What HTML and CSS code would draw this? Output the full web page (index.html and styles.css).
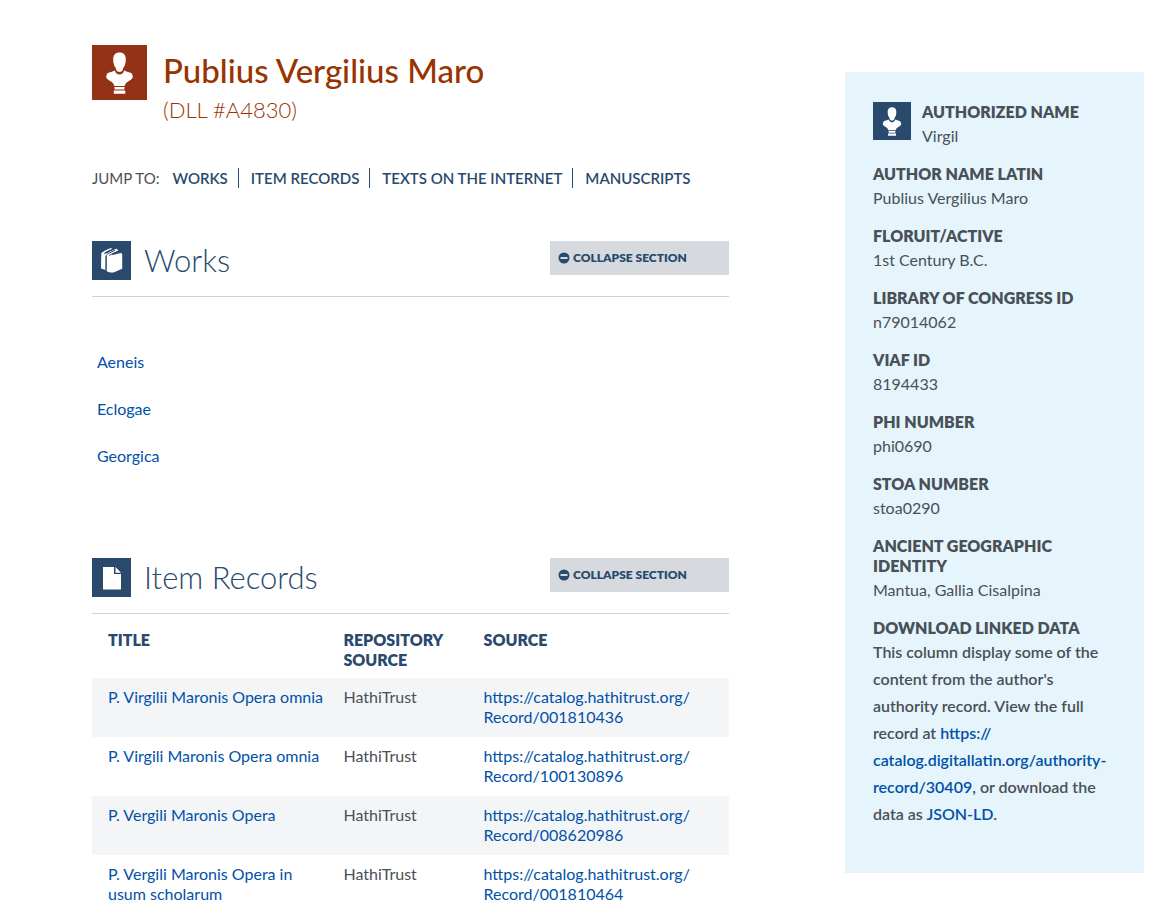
FILE: index.html
```html
<!DOCTYPE html>
<html lang="en">
<head>
<meta charset="utf-8">
<meta name="viewport" content="width=device-width, initial-scale=1">
<title>Publius Vergilius Maro</title>
<link rel="stylesheet" href="styles.css">
</head>
<body>
<svg class="sprite" aria-hidden="true">
  <symbol id="bust" viewBox="0 0 55 55">
    <path d="M27.500 7.500c4.200 0 6.300 2.700 6.300 6.500 0 4.500-1 7.300-2.900 9.400v1.300c-.8 1.500-2 2.200-3.400 2.200s-2.600-.7-3.400-2.200v-1.300c-1.900-2.100-2.900-4.900-2.900-9.400 0-3.800 2.100-6.500 6.300-6.500z"/>
    <path d="M22.800 25.500c.8 2.700 2.500 4 4.700 4s3.900-1.300 4.700-4c2 1.500 5.300 1.400 7.300 2.700 1.200 1.100.4 2.200 1.500 3.600-.8 2.300-2.500 3.400-5 4.700-2 1.400-2.800 2.700-3.300 4.500H22.300c-.5-1.800-1.300-3.100-3.300-4.500-2.500-1.300-4.200-2.400-5-4.700 1.100-1.400.3-2.500 1.500-3.600 2-1.300 5.300-1.200 7.300-2.700z"/>
    <path d="M22.500 42h10v1.500l-.5 1h-9l-.5-1zM21.800 45.500h11.500v3.200H21.800z"/>
  </symbol>
  <symbol id="books" viewBox="0 0 39 39">
    <path d="M9.300 12c2-1.700 6.500-3.800 9.700-5l1.200 1c-3 1-5.600 2.200-7.600 3.600l2.400.9c2.500-2 6-3.700 9.600-4.700l1.200 1-8.300 3.700-3.900 2.800V29L9 27.500z"/>
    <path d="M14.600 14.400c0-1 1-1.800 2.300-2.500l8-3.200 1.500.9-7.300 3.700 1.800.7 7.700-2 1.600.7v15l-8.700 3.700c-2 .6-5-.2-6.900-1.500z"/>
    <path class="icon-line" d="M12.200 12.700l8.800-4.300M14.100 29.500V15c.2-1 1-1.700 2.400-2.500l6.500-3.300M17.300 14.500c3-1.900 6.200-3.300 9.200-4.200"/>
  </symbol>
  <symbol id="file" viewBox="0 0 39 39">
    <path d="M11 9h11v7h7v15.500H11zM23.500 9l5.500 5.700h-5.500z"/>
  </symbol>
  <symbol id="minus" viewBox="0 0 12 12">
    <path fill-rule="evenodd" d="M6 .5a5.500 5.500 0 1 1 0 11a5.500 5.500 0 0 1 0-11zM2.500 5v2h7V5z"/>
  </symbol>
</svg>
<div class="page">
  <main>
    <header class="author">
      <svg class="icon icon-author"><use href="#bust"/></svg>
      <div>
        <h1>Publius Vergilius Maro</h1>
        <p class="author-id">(DLL #A4830)</p>
      </div>
    </header>
    <nav class="jump" aria-label="Jump to">
      <span>JUMP TO:</span>
      <ul>
        <li><a href="#works">WORKS</a></li>
        <li><a href="#items">ITEM RECORDS</a></li>
        <li><a href="#texts">TEXTS ON THE INTERNET</a></li>
        <li><a href="#manuscripts">MANUSCRIPTS</a></li>
      </ul>
    </nav>
    <section id="works">
      <div class="section-head">
        <svg class="icon"><use href="#books"/></svg>
        <h2>Works</h2>
        <button type="button" class="collapse"><svg><use href="#minus"/></svg>COLLAPSE SECTION</button>
      </div>
      <ul class="works">
        <li><a href="#aeneis">Aeneis</a></li>
        <li><a href="#eclogae">Eclogae</a></li>
        <li><a href="#georgica">Georgica</a></li>
      </ul>
    </section>
    <section id="items">
      <div class="section-head">
        <svg class="icon"><use href="#file"/></svg>
        <h2>Item Records</h2>
        <button type="button" class="collapse"><svg><use href="#minus"/></svg>COLLAPSE SECTION</button>
      </div>
      <table>
        <colgroup><col class="col-title"><col class="col-repo"><col></colgroup>
        <thead>
          <tr><th scope="col">TITLE</th><th scope="col">REPOSITORY SOURCE</th><th scope="col">SOURCE</th></tr>
        </thead>
        <tbody>
          <tr><td><a href="#r1">P. Virgilii Maronis Opera omnia</a></td><td>HathiTrust</td><td><a href="#s1">https://catalog.hathitrust.org/<wbr>Record/001810436</a></td></tr>
          <tr><td><a href="#r2">P. Virgili Maronis Opera omnia</a></td><td>HathiTrust</td><td><a href="#s2">https://catalog.hathitrust.org/<wbr>Record/100130896</a></td></tr>
          <tr><td><a href="#r3">P. Vergili Maronis Opera</a></td><td>HathiTrust</td><td><a href="#s3">https://catalog.hathitrust.org/<wbr>Record/008620986</a></td></tr>
          <tr><td><a href="#r4">P. Vergili Maronis Opera in usum scholarum</a></td><td>HathiTrust</td><td><a href="#s4">https://catalog.hathitrust.org/<wbr>Record/001810464</a></td></tr>
        </tbody>
      </table>
    </section>
  </main>
  <aside>
    <div class="authorized">
      <svg class="icon"><use href="#bust"/></svg>
      <dl><div><dt>AUTHORIZED NAME</dt><dd>Virgil</dd></div></dl>
    </div>
    <dl>
      <div><dt>AUTHOR NAME LATIN</dt><dd>Publius Vergilius Maro</dd></div>
      <div><dt>FLORUIT/ACTIVE</dt><dd>1st Century B.C.</dd></div>
      <div><dt>LIBRARY OF CONGRESS ID</dt><dd>n79014062</dd></div>
      <div><dt>VIAF ID</dt><dd>8194433</dd></div>
      <div><dt>PHI NUMBER</dt><dd>phi0690</dd></div>
      <div><dt>STOA NUMBER</dt><dd>stoa0290</dd></div>
      <div><dt>ANCIENT GEOGRAPHIC IDENTITY</dt><dd>Mantua, Gallia Cisalpina</dd></div>
    </dl>
    <h3>DOWNLOAD LINKED DATA</h3>
    <p class="download">This column display some of the content from the author's authority record. View the full record at <a href="#record">https://<wbr>catalog.digitallatin.org/authority-record/30409</a>, or download the data as <a href="#json">JSON-LD</a>.</p>
  </aside>
</div>
</body>
</html>
```
FILE: styles.css
```css
* { box-sizing: border-box; }
body {
  margin: 0;
  background: #fff;
  color: #495057;
  font: 400 16px/20px Lato, "Liberation Sans", sans-serif;
}
h1, h2, h3, p, ul, dl, dd { margin: 0; padding: 0; }
ul { list-style: none; }
a { color: #0051a8; text-decoration: none; }
a:hover { text-decoration: underline; }
.sprite { position: absolute; width: 0; height: 0; }
.page {
  display: grid;
  grid-template-columns: minmax(0, 637fr) minmax(0, 299fr);
  gap: 116px;
  align-items: start;
  padding: 45px 28px 32px 92px;
}
.icon {
  flex: none;
  width: 39px;
  height: 39px;
  background: #29496d;
  fill: #fff;
}
.icon-line { fill: none; stroke: #29496d; stroke-width: 1; }

.author { display: flex; gap: 16px; color: #993300; }
.icon-author { width: 55px; height: 55px; background: #943217; }
h1 { font-size: 33px; line-height: 50px; font-weight: 500; }
.author-id { font-size: 22px; line-height: 30px; font-weight: 300; }

.jump { display: flex; gap: 13px; margin-top: 43px; font-size: 15px; }
.jump ul { display: flex; }
.jump li + li { margin-left: 10px; padding-left: 12px; border-left: 1px solid #29496d; }
.jump a { color: #29496d; font-weight: 600; }

.section-head {
  display: flex;
  align-items: flex-start;
  gap: 13px;
  margin-top: 53px;
  padding-bottom: 16px;
  border-bottom: 1px solid #d0d2d3;
}
h2 { font-size: 31px; line-height: 38px; font-weight: 300; color: #29496d; }
.collapse {
  display: flex;
  align-items: center;
  gap: 3px;
  width: 179px;
  height: 34px;
  margin-left: auto;
  padding: 0 8px;
  border: 0;
  background: #d6dade;
  color: #29496d;
  font: 800 12px/20px Lato, sans-serif;
}
.collapse svg { width: 12px; height: 12px; fill: currentColor; }
.works { display: grid; gap: 27px; padding: 55px 5px 39px; }

table { width: 100%; border-collapse: collapse; table-layout: fixed; }
.col-title { width: 39%; }
.col-repo { width: 22%; }
th, td { padding: 9px 10px 10px 16px; text-align: left; vertical-align: top; }
th:nth-child(n+2), td:nth-child(n+2) { padding-left: 3px; }
th { padding-top: 16px; padding-bottom: 8px; color: #29496d; font-weight: 800; }
tbody tr:nth-child(odd) { background: #f4f5f7; }

aside { margin-top: 27px; padding: 30px 28px 46px; background: #e5f5fb; }
.authorized { display: flex; gap: 11px; }
.authorized .icon { width: 38px; height: 38px; }
dl > div { margin-bottom: 15px; }
dt, h3 { font-size: 16px; line-height: 20px; font-weight: 800; }
dd { line-height: 27px; }
.download { line-height: 27px; font-weight: 600; }
```
